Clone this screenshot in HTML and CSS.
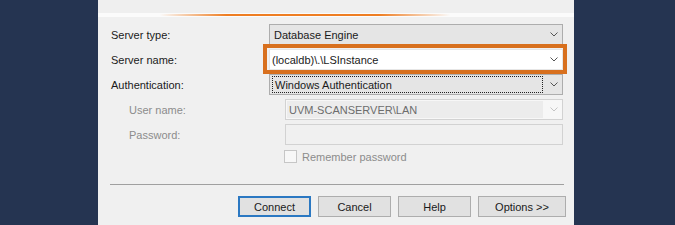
FILE: index.html
```html
<!DOCTYPE html>
<html>
<head>
<meta charset="utf-8">
<link rel="stylesheet" href="styles.css">
</head>
<body>
<div class="dialog">
  <div class="top"></div>
  <div class="band"><div class="band-line"></div></div>
  <div class="form">
    <div class="lbl">Server type:</div>
    <div class="combo">
      <span class="val">Database Engine</span>
      <span class="arrow"><svg width="8" height="5" viewBox="0 0 8 5"><polyline points="0.5,0.5 4,4 7.5,0.5" fill="none" stroke="#555" stroke-width="1"/></svg></span>
    </div>

    <div class="lbl">Server name:</div>
    <div class="field-wrap">
      <div class="combo edit">
        <span class="val">(localdb)\.\LSInstance</span>
        <span class="arrow"><svg width="8" height="5" viewBox="0 0 8 5"><polyline points="0.5,0.5 4,4 7.5,0.5" fill="none" stroke="#555" stroke-width="1"/></svg></span>
      </div>
      <div class="highlight"></div>
    </div>

    <div class="lbl">Authentication:</div>
    <div class="combo auth">
      <span class="val focus">Windows Authentication</span>
      <span class="arrow"><svg width="8" height="5" viewBox="0 0 8 5"><polyline points="0.5,0.5 4,4 7.5,0.5" fill="none" stroke="#555" stroke-width="1"/></svg></span>
    </div>

    <div class="lbl sub dis">User name:</div>
    <div class="combo sub disabled">
      <span class="val">UVM-SCANSERVER\LAN</span>
      <span class="arrow"><svg width="8" height="5" viewBox="0 0 8 5"><polyline points="0.5,0.5 4,4 7.5,0.5" fill="none" stroke="#c4c4c4" stroke-width="1"/></svg></span>
    </div>

    <div class="lbl sub dis">Password:</div>
    <div class="input sub"></div>

    <div></div>
    <div class="check sub"><span class="box"></span><span>Remember password</span></div>
  </div>
  <div class="sep"></div>
  <div class="buttons">
    <div class="btn default">Connect</div>
    <div class="btn">Cancel</div>
    <div class="btn">Help</div>
    <div class="btn wide">Options &gt;&gt;</div>
  </div>
</div>
</body>
</html>
```

FILE: styles.css
```css
html, body {
  margin: 0;
  padding: 0;
}
body {
  background: #253451;
  height: 225px;
  overflow: hidden;
  font-family: "Liberation Sans", Arial, sans-serif;
  font-size: 11px;
  color: #1a1a1a;
}
.dialog {
  margin-left: 98px;
  width: 476px;
  height: 225px;
  background: #f0f0f0;
}
.top {
  height: 13px;
  background: #efefef;
}
.band {
  height: 4px;
  box-sizing: border-box;
  padding-top: 1px;
  background: #fbfbfb;
}
.band-line {
  height: 2px;
  background: linear-gradient(to right,
    rgba(238,125,34,0) 13%,
    #ee7d22 27%,
    #ee7d22 59%,
    rgba(238,125,34,0) 74%);
}
.form {
  display: grid;
  grid-template-columns: 158px 294px;
  row-gap: 4px;
  padding: 7px 0 0 13px;
}
.lbl {
  height: 21px;
  display: flex;
  align-items: center;
}
.lbl.sub {
  padding-left: 18px;
}
.lbl.dis {
  color: #8c8c8c;
}
.combo {
  height: 21px;
  box-sizing: border-box;
  border: 1px solid #adadad;
  background: #e5e5e5;
  display: flex;
  align-items: center;
  padding-left: 4px;
}
.combo .val {
  flex: 1;
  white-space: nowrap;
}
.combo .arrow {
  width: 19px;
  display: flex;
  justify-content: flex-end;
  padding-right: 4px;
  box-sizing: border-box;
}
.combo .arrow svg {
  display: block;
}
.field-wrap {
  position: relative;
}
.combo.edit {
  background: #ffffff;
  border-color: #e6e6e6;
  padding-left: 2px;
}
.highlight {
  position: absolute;
  left: -6px;
  right: -4px;
  top: -5px;
  bottom: -4px;
  border: 4px solid #d8701e;
  pointer-events: none;
}
.combo.auth {
  padding-left: 2px;
}
.combo.auth .val {
  align-self: stretch;
  margin: 1px 0;
  border: 1px dotted #222;
  padding-left: 2px;
  display: flex;
  align-items: center;
}
.combo.sub,
.input.sub,
.check.sub {
  margin-left: 16px;
}
.combo.disabled {
  background: #f7f7f7;
  border-color: #d2d2d2;
  color: #6d6d6d;
  padding-left: 1px;
}
.combo.disabled .val {
  align-self: stretch;
  margin: 1px 0;
  background: #ececec;
  padding-left: 2px;
  display: flex;
  align-items: center;
}
.input {
  height: 21px;
  box-sizing: border-box;
  border: 1px solid #d2d2d2;
  background: #f0f0f0;
}
.check {
  margin-top: 1px;
  height: 13px;
  display: flex;
  align-items: center;
  gap: 5px;
  color: #8c8c8c;
}
.check.sub {
  margin-left: 15px;
}
.check .box {
  width: 13px;
  height: 13px;
  box-sizing: border-box;
  border: 1px solid #c6c6c6;
  background: #f7f7f7;
}
.sep {
  margin: 21px 10px 0 12px;
  height: 1px;
  background: #a0a0a0;
}
.buttons {
  margin-top: 11px;
  display: flex;
  justify-content: flex-end;
  gap: 7px;
  padding-right: 8px;
}
.btn {
  width: 73px;
  height: 21px;
  box-sizing: border-box;
  border: 1px solid #adadad;
  background: #e1e1e1;
  display: flex;
  align-items: center;
  justify-content: center;
}
.btn.default {
  border: 2px solid #2b78c2;
}
.btn.wide {
  width: 88px;
}
```
